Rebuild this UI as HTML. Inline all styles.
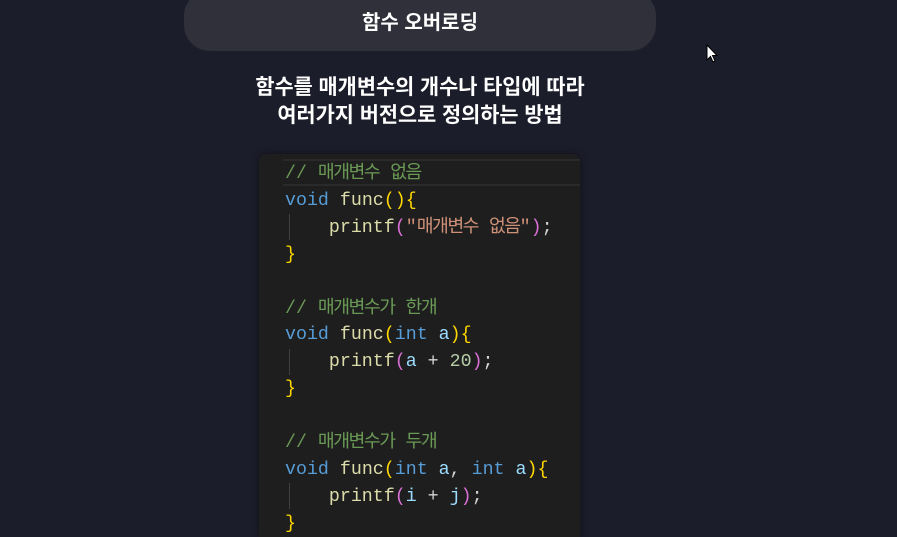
<!DOCTYPE html>
<html><head><meta charset="utf-8"><style>
html,body{margin:0;padding:0;overflow:hidden;width:897px;height:537px}
body{background:#1c1d2a;position:relative;font-family:"Liberation Sans","Noto Sans CJK KR",sans-serif;color:#fff}
.pill{position:absolute;left:184px;top:-10px;width:472px;height:61px;border-radius:26px;background:#2f3039;}
.title{position:absolute;left:184px;width:472px;top:10px;text-align:center;font-size:20px;font-weight:bold;line-height:26px}
.sub{position:absolute;left:170px;width:500px;top:74px;text-align:center;font-size:20.8px;font-weight:bold;line-height:28px}
.code{position:absolute;left:259px;top:154px;width:321px;height:383px;background:#1e1e1e;border-radius:8px 8px 0 0;box-shadow:0 0 8px rgba(0,0,0,.5)}
.hl{position:absolute;left:283px;top:159px;width:297px;height:27px;border-top:2px solid #2a2a2a;border-bottom:2px solid #2a2a2a;box-sizing:border-box}
.guide{position:absolute;left:289px;width:1px;background:#404040;height:26px}
pre{position:absolute;left:285px;top:161px;margin:0;font-family:"Liberation Mono","Noto Sans CJK KR",monospace;font-size:18.3px;line-height:26.9px;color:#d4d4d4}
.k{letter-spacing:-1.5px}
.c{color:#6a9955}.b{color:#569cd6}.f{color:#dcdcaa}.y{color:#ffd700}.s{color:#ce9178}.p{color:#da70d6}.n{color:#b5cea8}.v{color:#9cdcfe}
.cur{position:absolute;left:706px;top:44px}
</style></head><body>
<div class="pill"></div>
<div class="title">함수 오버로딩</div>
<div class="sub">함수를 매개변수의 개수나 타입에 따라<br>여러가지 버전으로 정의하는 방법</div>
<div class="code"></div>
<div class="hl"></div>
<div class="guide" style="top:214px"></div>
<div class="guide" style="top:349px"></div>
<div class="guide" style="top:483px"></div>
<pre><span class="c">// <span class="k">매개변수</span> <span class="k">없음</span></span>
<span class="b">void</span> <span class="f">func</span><span class="y">(){</span>
    <span class="f">printf</span><span class="p">(</span><span class="s">"<span class="k">매개변수</span> <span class="k">없음</span>"</span><span class="p">)</span>;
<span class="y">}</span>

<span class="c">// <span class="k">매개변수가</span> <span class="k">한개</span></span>
<span class="b">void</span> <span class="f">func</span><span class="y">(</span><span class="b">int</span> <span class="v">a</span><span class="y">){</span>
    <span class="f">printf</span><span class="p">(</span><span class="v">a</span> + <span class="n">20</span><span class="p">)</span>;
<span class="y">}</span>

<span class="c">// <span class="k">매개변수가</span> <span class="k">두개</span></span>
<span class="b">void</span> <span class="f">func</span><span class="y">(</span><span class="b">int</span> <span class="v">a</span>, <span class="b">int</span> <span class="v">a</span><span class="y">){</span>
    <span class="f">printf</span><span class="p">(</span><span class="v">i</span> + <span class="v">j</span><span class="p">)</span>;
<span class="y">}</span></pre>
<svg class="cur" width="14" height="20" viewBox="0 0 14 20"><path d="M1 1 L1 16 L4.5 12.5 L7 18 L9 17 L6.5 11.5 L11 11.5 Z" fill="#fff" stroke="#000" stroke-width="1"/></svg>
</body></html>
